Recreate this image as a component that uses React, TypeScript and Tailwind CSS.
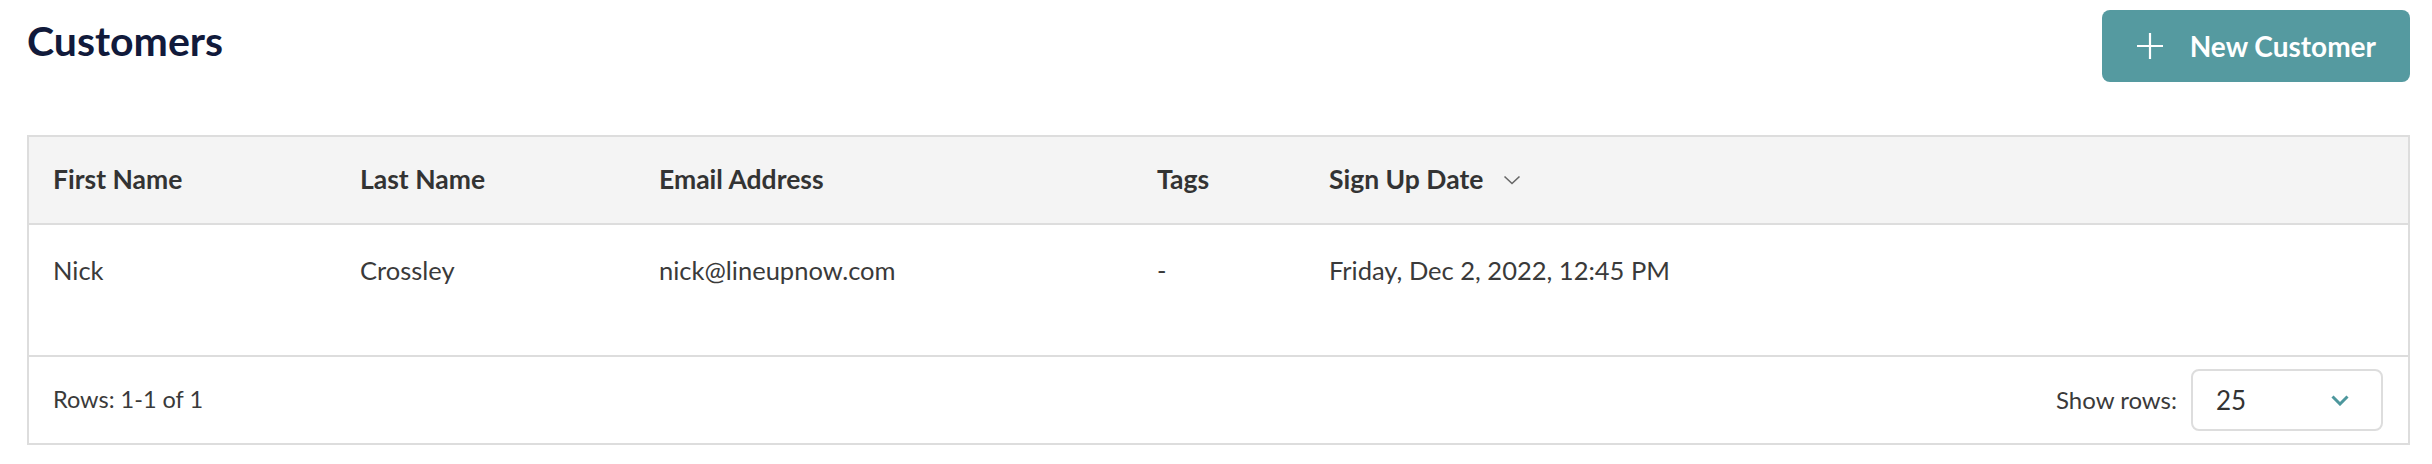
import { memo } from "react";

const font = { fontFamily: "Lato, 'Open Sans', sans-serif" };

function PlusIcon() {
  return (
    <svg width="28" height="28" viewBox="0 0 28 28" fill="none">
      <path d="M14 1v26M1 14h26" stroke="white" strokeWidth="2.2" />
    </svg>
  );
}

function SortChevron() {
  return (
    <svg width="18" height="10" viewBox="0 0 18 10" fill="none">
      <path d="M1.5 1.5l7.5 7 7.5-7" stroke="#666666" strokeWidth="1.6" />
    </svg>
  );
}

function SelectChevron() {
  return (
    <svg width="18" height="11" viewBox="0 0 18 11" fill="none">
      <path d="M1.5 1.5l7.5 7.5 7.5-7.5" stroke="#4d979d" strokeWidth="3" />
    </svg>
  );
}

const cols = "grid grid-cols-[307px_299px_498px_172px_1fr]";

const App = memo(function App() {
  return (
    <div className="w-full h-[464px] bg-white pl-[27px] pr-[22px] pt-[10px]" style={font}>
      <div className="flex justify-between items-start">
        <h1 className="mt-[7px] text-[41px] leading-[48px] font-bold text-[#111a3b]">
          Customers
        </h1>
        <button className="h-[72px] flex items-center gap-[26px] pl-[34px] pr-[34px] rounded-[8px] bg-[#559aa0] text-white text-[28px] font-bold">
          <PlusIcon />
          New Customer
        </button>
      </div>

      <div className="mt-[53px] border-2 border-[#dddddd]">
        <div className={`${cols} h-[88px] items-center bg-[#f4f4f4] border-b-2 border-[#dddddd] text-[26.5px] font-bold text-[#333333]`}>
          <div className="pl-[24px]">First Name</div>
          <div className="pl-[24px]">Last Name</div>
          <div className="pl-[24px]">Email Address</div>
          <div className="pl-[24px]">Tags</div>
          <div className="pl-[24px] flex items-center gap-[20px]">
            Sign Up Date
            <SortChevron />
          </div>
        </div>

        <div className={`${cols} h-[132px] pt-[30px] border-b-2 border-[#dddddd] text-[25.5px] leading-[31px] text-[#3a3a3a]`}>
          <div className="pl-[24px]">Nick</div>
          <div className="pl-[24px]">Crossley</div>
          <div className="pl-[24px]">nick@lineupnow.com</div>
          <div className="pl-[24px]">-</div>
          <div className="pl-[24px]">Friday, Dec 2, 2022, 12:45 PM</div>
        </div>

        <div className="h-[86px] flex items-center justify-between pl-[24px] pr-[25px] text-[24px] text-[#3a3a3a]">
          <span className="text-[23.5px]">Rows: 1-1 of 1</span>
          <div className="flex items-center gap-[14px]">
            <span>Show rows:</span>
            <div className="w-[192px] h-[62px] flex items-center justify-between pl-[23px] pr-[32px] border-2 border-[#dddddd] rounded-[8px] text-[26px] text-[#333333]">
              <span>25</span>
              <SelectChevron />
            </div>
          </div>
        </div>
      </div>
    </div>
  );
});

export default App;
